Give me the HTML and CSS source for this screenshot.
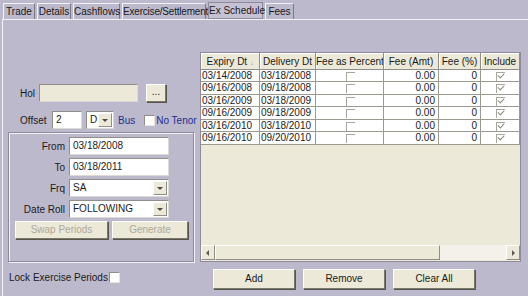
FILE: index.html
```html
<!DOCTYPE html>
<html lang="en">
<head>
    <meta charset="UTF-8">
    <title>Ex Schedule</title>
    <link rel="stylesheet" href="styles.css">
</head>
<body>
    <div class="tabs">
        <div class="tab t-trade">Trade</div>
        <div class="tab t-details">Details</div>
        <div class="tab t-cash">Cashflows</div>
        <div class="tab t-ex">Exercise/Settlement</div>
        <div class="tab t-sched active">Ex Schedule</div>
        <div class="tab t-fees">Fees</div>
    </div>

    <div class="panel">
        <div class="left">
            <div class="row hol-row">
                <span class="lbl hol-lbl">Hol</span>
                <div class="field disabled hol-field"></div>
                <div class="btn dots">...</div>
            </div>
            <div class="row offset-row">
                <span class="lbl off-lbl">Offset</span>
                <div class="field off-field">2</div>
                <div class="field combo d-combo">D<span class="arrow"></span></div>
                <span class="blue bus">Bus</span>
                <span class="check"></span>
                <span class="blue">No Tenor</span>
            </div>
            <div class="group">
                <div class="grow">
                    <span class="glbl">From</span>
                    <div class="field gfield">03/18/2008</div>
                </div>
                <div class="grow">
                    <span class="glbl">To</span>
                    <div class="field gfield">03/18/2011</div>
                </div>
                <div class="grow">
                    <span class="glbl">Frq</span>
                    <div class="field combo gfield">SA<span class="arrow"></span></div>
                </div>
                <div class="grow">
                    <span class="glbl">Date Roll</span>
                    <div class="field combo gfield">FOLLOWING<span class="arrow"></span></div>
                </div>
                <div class="gbuttons">
                    <div class="btn off swap">Swap Periods</div>
                    <div class="btn off gen">Generate</div>
                </div>
            </div>
            <div class="row lock-row">
                <span>Lock Exercise Periods</span>
                <span class="check"></span>
            </div>
        </div>

        <div class="right">
            <div class="grid">
                <table>
                    <thead>
                        <tr>
                            <th class="c1">Expiry Dt <span class="sort">&#x2193;</span></th>
                            <th class="c2">Delivery Dt</th>
                            <th class="c3">Fee as Percent</th>
                            <th class="c4">Fee (Amt)</th>
                            <th class="c5">Fee (%)</th>
                            <th class="c6">Include</th>
                        </tr>
                    </thead>
                    <tbody>
                        <tr class="r12"><td>03/14/2008</td><td>03/18/2008</td><td class="mid"><span class="gcheck"></span></td><td class="num">0.00</td><td class="num">0</td><td class="mid"><span class="gcheck on"></span></td></tr>
                        <tr class="r13"><td>09/16/2008</td><td>09/18/2008</td><td class="mid"><span class="gcheck"></span></td><td class="num">0.00</td><td class="num">0</td><td class="mid"><span class="gcheck on"></span></td></tr>
                        <tr class="r12"><td>03/16/2009</td><td>03/18/2009</td><td class="mid"><span class="gcheck"></span></td><td class="num">0.00</td><td class="num">0</td><td class="mid"><span class="gcheck on"></span></td></tr>
                        <tr class="r13"><td>09/16/2009</td><td>09/18/2009</td><td class="mid"><span class="gcheck"></span></td><td class="num">0.00</td><td class="num">0</td><td class="mid"><span class="gcheck on"></span></td></tr>
                        <tr class="r12"><td>03/16/2010</td><td>03/18/2010</td><td class="mid"><span class="gcheck"></span></td><td class="num">0.00</td><td class="num">0</td><td class="mid"><span class="gcheck on"></span></td></tr>
                        <tr class="r13"><td>09/16/2010</td><td>09/20/2010</td><td class="mid"><span class="gcheck"></span></td><td class="num">0.00</td><td class="num">0</td><td class="mid"><span class="gcheck on"></span></td></tr>
                    </tbody>
                </table>
                <div class="empty"></div>
                <div class="hscroll">
                    <div class="sbtn"><span class="tri-l"></span></div>
                    <div class="thumb"></div>
                    <div class="track"></div>
                    <div class="sbtn"><span class="tri-r"></span></div>
                </div>
            </div>
            <div class="actions">
                <div class="btn act">Add</div>
                <div class="btn act">Remove</div>
                <div class="btn act">Clear All</div>
            </div>
        </div>
    </div>
</body>
</html>
```

FILE: styles.css
```css
body { margin: 0; width: 528px; height: 296px; overflow: hidden; background: #bdb9cc; font-family: "Liberation Sans", Arial, sans-serif; font-size: 10px; color: #1a1a1a; }

/* tab strip */
.tabs { display: flex; height: 19px; padding: 3px 0 0 3px; box-sizing: border-box; gap: 2px; }
.tab { height: 16px; line-height: 15px; box-sizing: border-box; text-align: center; border-left: 1px solid #f4f2f8; border-top: 1px solid #f4f2f8; border-right: 1px solid #7d7a88; white-space: nowrap; }
.t-trade { width: 32px; }
.t-details { width: 34px; }
.t-cash { width: 47px; }
.t-ex { width: 84px; letter-spacing: -0.2px; }
.t-sched { width: 55px; }
.t-fees { width: 29px; }
.tab.active { margin-top: -1px; height: 17px; border: 1px solid #8e8a99; background: #c6c2d4; }

.panel { display: flex; height: 277px; margin-left: 2px; border-left: 1px solid #f4f2f8; border-top: 1px solid #f4f2f8; box-sizing: border-box; }

/* left side */
.left { width: 195px; display: flex; flex-direction: column; padding-top: 64px; }
.row { display: flex; align-items: center; height: 18px; }
.lbl { padding-left: 17px; }
.hol-lbl { width: 19px; }
.off-lbl { width: 32px; }
.field { height: 18px; box-sizing: border-box; background: #fff; border: 1px solid #8f8e8a; border-right-color: #dcdad2; border-bottom-color: #dcdad2; padding-left: 3px; line-height: 16px; position: relative; }
.field.disabled { background: #ece9d8; }
.hol-field { width: 99px; }
.dots { width: 20px; height: 18px; margin-left: 8px; line-height: 14px; }
.offset-row { margin-top: 9px; }
.off-field { width: 30px; }
.d-combo { width: 28px; margin-left: 4px; }
.combo .arrow { position: absolute; right: 1px; top: 1px; width: 14px; height: 14px; background: #ece9d8; border-left: 1px solid #fff; border-top: 1px solid #fff; border-right: 1px solid #8f8e8a; border-bottom: 1px solid #8f8e8a; box-sizing: border-box; }
.combo .arrow::after { content: ""; position: absolute; left: 3px; top: 5px; border-left: 3px solid transparent; border-right: 3px solid transparent; border-top: 3px solid #4a4a4a; }
.blue { color: #232f8e; white-space: nowrap; }
.bus { margin-left: 4px; margin-right: 9px; }
.check { width: 9px; height: 9px; background: #fff; border: 1px solid #8f8e8a; border-right-color: #e6e4dc; border-bottom-color: #e6e4dc; display: inline-block; margin-right: 1px; flex: none; }

.group { margin: 3px 0 0 5px; width: 186px; height: 130px; box-sizing: border-box; border: 1px solid #8e8a99; box-shadow: inset 1px 1px 0 #f4f2f8, 1px 1px 0 #f4f2f8; padding-top: 4px; }
.grow { display: flex; align-items: center; height: 18px; margin-bottom: 3px; }
.glbl { width: 56px; text-align: right; padding-right: 4px; }
.gfield { width: 100px; }
.gbuttons { display: flex; gap: 4px; margin: 3px 0 0 6px; }
.btn { background: #ece9d8; text-align: center; box-sizing: border-box; border: 1px solid #fff; border-right-color: #7a7869; border-bottom-color: #7a7869; box-shadow: 1px 1px 0 #55534a; }
.btn.off { color: #aca899; height: 18px; line-height: 16px; }
.swap { width: 93px; }
.gen { width: 76px; }
.lock-row { margin: 6px 0 0 6px; gap: 1px; }

/* right side */
.right { flex: 1; display: flex; flex-direction: column; padding-top: 32px; padding-left: 2px; }
.grid { width: 321px; height: 210px; box-sizing: border-box; border: 1px solid #8e8a99; background: #ece9d8; display: flex; flex-direction: column; }
table { border-collapse: collapse; table-layout: fixed; width: 319px; }
th { height: 16px; padding: 0; font-weight: normal; background: #ece9d8; border-right: 1px solid #8f8e8a; border-bottom: 1px solid #8f8e8a; box-shadow: inset 1px 1px 0 #fff; white-space: nowrap; overflow: hidden; }
.sort { font-size: 7px; color: #9a988c; }
.c1 { width: 58px; }
.c2 { width: 55px; }
.c3 { width: 67px; }
.c4 { width: 54px; }
.c5 { width: 41px; }
.c6 { width: 38px; }
td { padding: 0 0 0 1px; background: #fff; border-right: 1px solid #9c9a90; border-bottom: 1px solid #9c9a90; white-space: nowrap; overflow: hidden; }
.r12 td { height: 11px; line-height: 11px; }
.r13 td { height: 12px; line-height: 12px; }
td.num { text-align: right; padding-right: 3px; }
td.mid { text-align: center; }
.gcheck { display: inline-block; width: 9px; height: 9px; box-sizing: border-box; border-left: 1px solid #a8a69e; border-top: 1px solid #a8a69e; vertical-align: middle; position: relative; }
.gcheck.on::after { content: ""; position: absolute; left: 1px; top: 0px; width: 5px; height: 3px; border-left: 1px solid #8a887e; border-bottom: 1px solid #8a887e; transform: rotate(-45deg); }
.empty { flex: 1; }
.hscroll { display: flex; height: 15px; margin: 0 0 1px 0; }
.sbtn { width: 14px; height: 15px; box-sizing: border-box; background: #ece9d8; border: 1px solid #fff; border-right-color: #8f8e8a; border-bottom-color: #8f8e8a; position: relative; }
.tri-l { position: absolute; left: 4px; top: 4px; border-top: 3px solid transparent; border-bottom: 3px solid transparent; border-right: 3px solid #5a5a5a; }
.tri-r { position: absolute; left: 5px; top: 4px; border-top: 3px solid transparent; border-bottom: 3px solid transparent; border-left: 3px solid #5a5a5a; }
.thumb { width: 225px; box-sizing: border-box; background: #ece9d8; border: 1px solid #fff; border-right-color: #8f8e8a; border-bottom-color: #8f8e8a; }
.track { flex: 1; background: #f3f1ea; }

.actions { display: flex; gap: 8px; margin: 7px 0 0 13px; }
.act { width: 82px; height: 20px; line-height: 18px; }
```
